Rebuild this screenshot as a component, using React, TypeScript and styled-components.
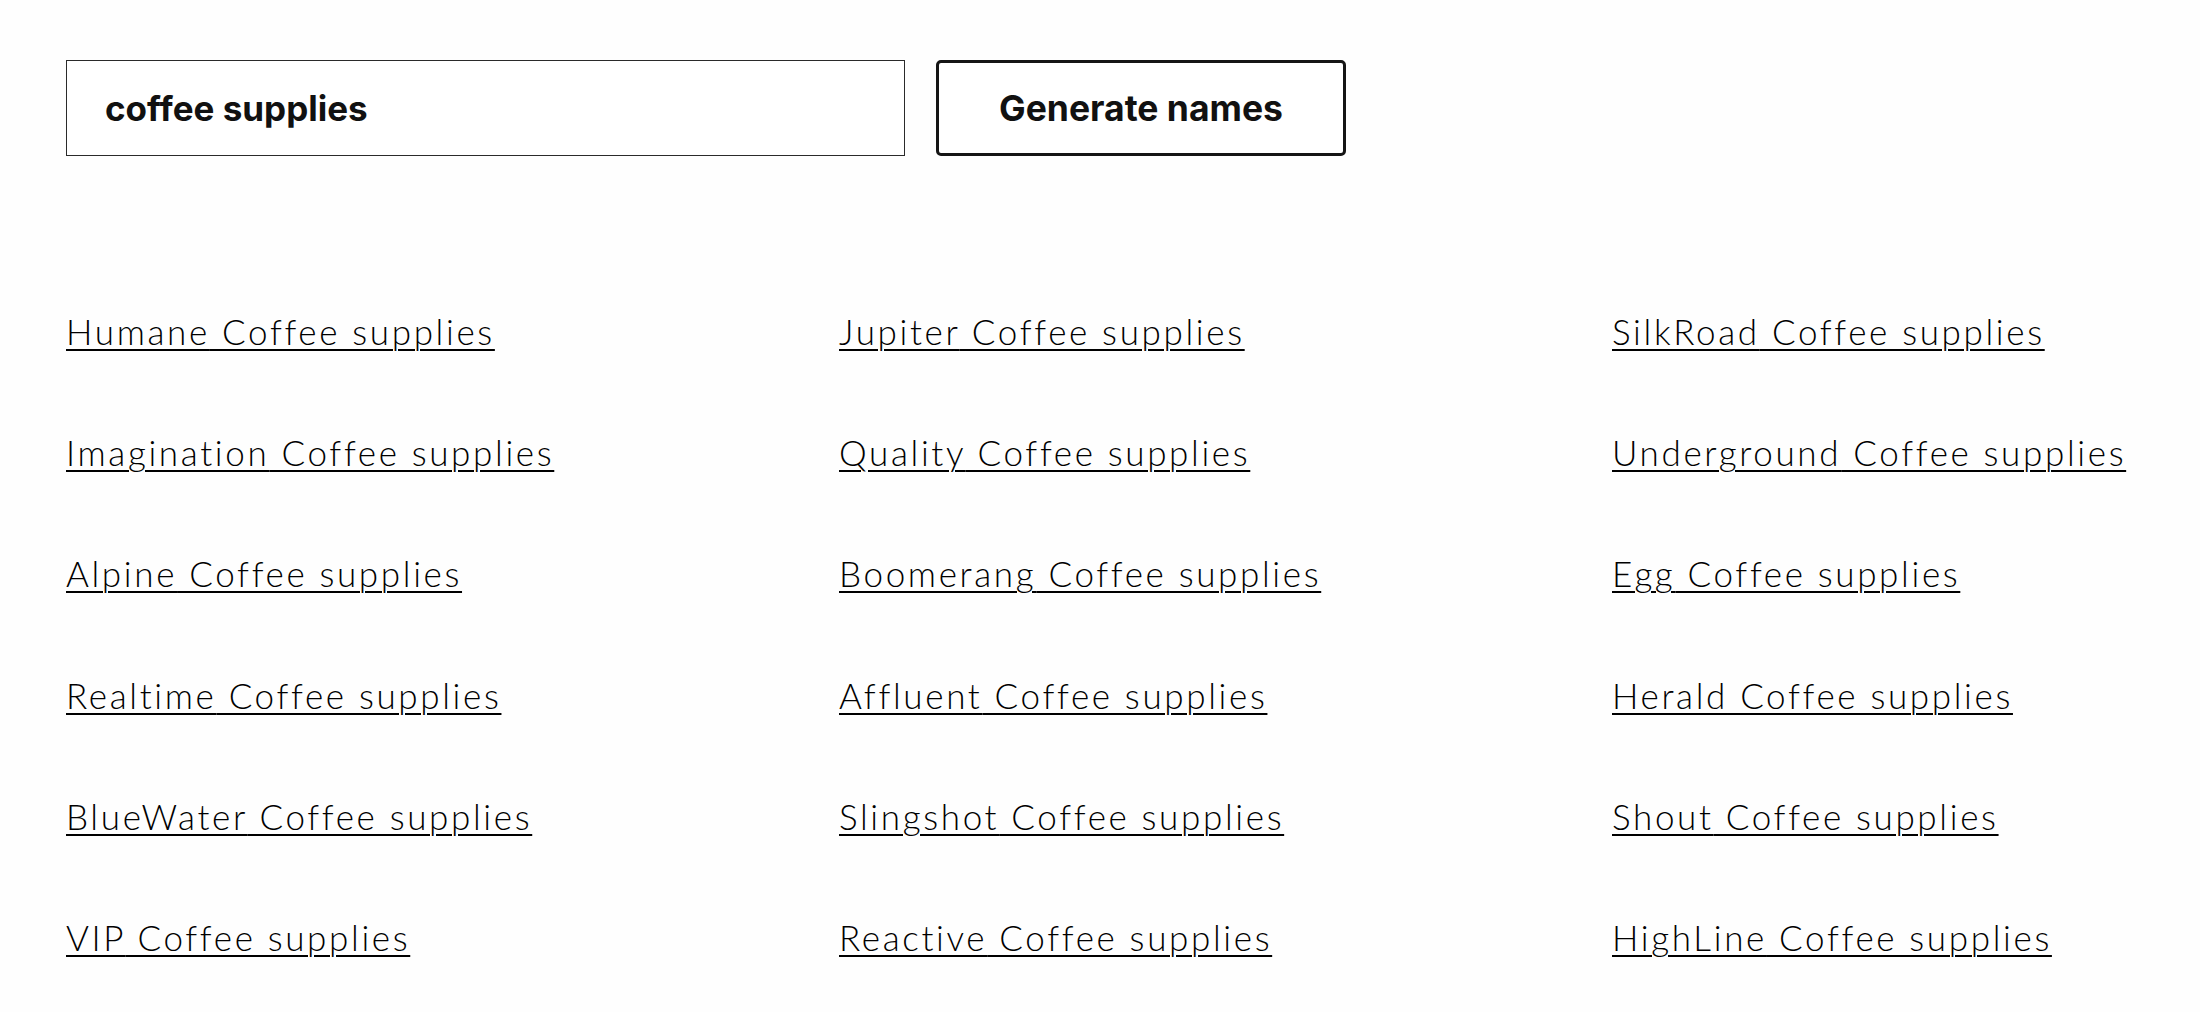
import React from "react";
import styled, { createGlobalStyle } from "styled-components";

const Global = createGlobalStyle`
  html, body { margin: 0; padding: 0; background: #fefefe; }
  body { font-family: "Inter", "Liberation Sans", sans-serif; color: #111; }
`;

const Page = styled.main`
  padding: 60px 0 0 66px;
  width: 2200px;
  box-sizing: border-box;
  overflow: hidden;
`;

const Form = styled.form`
  display: flex;
  align-items: stretch;
  gap: 31px;
`;

const Input = styled.input`
  box-sizing: border-box;
  width: 839px;
  height: 96px;
  border: 1.5px solid #2a2a2a;
  border-radius: 0;
  padding: 0 0 0 38px;
  font-family: "Inter", "Liberation Sans", sans-serif;
  font-weight: 700;
  font-size: 35px;
  color: #111;
  background: #fff;
  outline: none;
`;

const Button = styled.button`
  box-sizing: border-box;
  width: 410px;
  height: 96px;
  border: 3px solid #151515;
  border-radius: 5px;
  background: #fff;
  font-family: "Inter", "Liberation Sans", sans-serif;
  font-weight: 700;
  font-size: 35.5px;
  color: #111;
  cursor: pointer;
`;

const Grid = styled.ul`
  list-style: none;
  margin: 154px 0 0 0;
  padding: 0;
  display: grid;
  grid-template-columns: repeat(3, 773px);
  row-gap: 78px;
`;

const Item = styled.li`
  font-family: "Lato", "Liberation Sans", sans-serif;
  font-weight: 300;
  font-size: 35px;
  letter-spacing: 2.65px;
  line-height: 43.2px;
  white-space: nowrap;
`;

const NameLink = styled.a`
  color: #000;
  text-decoration: underline;
  text-decoration-thickness: 1.5px;
  text-underline-offset: 4px;
`;

const names = [
  "Humane", "Jupiter", "SilkRoad",
  "Imagination", "Quality", "Underground",
  "Alpine", "Boomerang", "Egg",
  "Realtime", "Affluent", "Herald",
  "BlueWater", "Slingshot", "Shout",
  "VIP", "Reactive", "HighLine",
];

export default function App() {
  return (
    <Page>
      <Global />
      <Form onSubmit={(e) => e.preventDefault()}>
        <Input defaultValue="coffee supplies" />
        <Button type="submit">Generate names</Button>
      </Form>
      <Grid>
        {names.map((n) => (
          <Item key={n}>
            <NameLink href="#">{n} Coffee supplies</NameLink>
          </Item>
        ))}
      </Grid>
    </Page>
  );
}
